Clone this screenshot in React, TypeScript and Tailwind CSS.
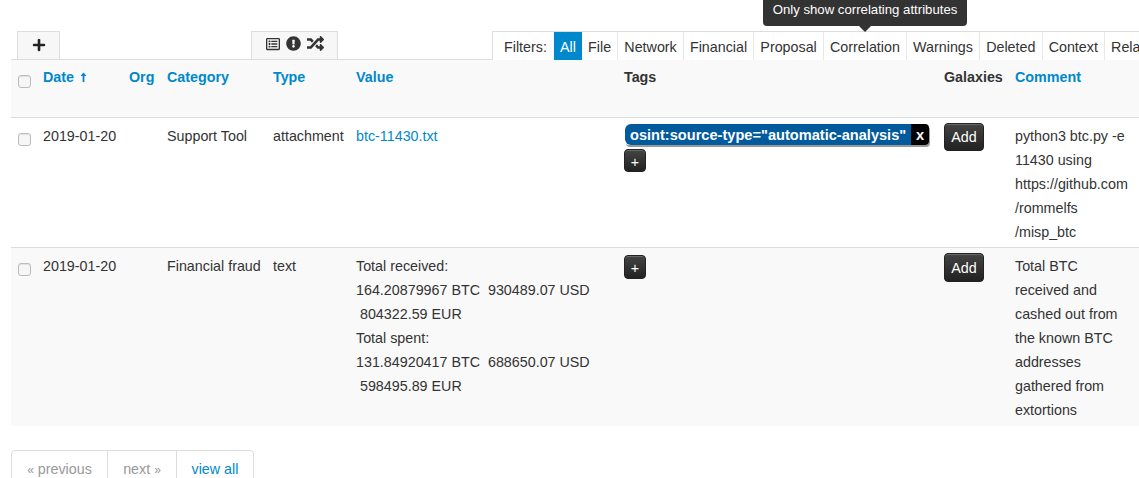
import { FaPlus, FaRegListAlt, FaExclamationCircle, FaRandom } from 'react-icons/fa';

const filters = ['File', 'Network', 'Financial', 'Proposal', 'Correlation', 'Warnings', 'Deleted', 'Context', 'Related'];

const DarkButton = ({ label, className }: { label: string; className: string }) => (
  <span
    className={`flex items-center justify-center rounded-[4px] border border-[#222] bg-gradient-to-b from-[#444] to-[#222] text-white shadow-[inset_0_1px_0_rgba(255,255,255,0.2)] ${className}`}
  >
    {label}
  </span>
);

const Check = () => (
  <span className="block w-[13px] h-[13px] rounded-[3px] border border-[#bbb] bg-[#f6f6f6] shadow-[inset_0_1px_1px_rgba(0,0,0,0.08)]" />
);

const SortArrow = () => (
  <svg width="7" height="11" viewBox="0 0 7 11" className="inline-block ml-[2px] mb-[2px]">
    <path d="M3.5 0.5 L6.5 4 H4.4 V10 H2.6 V4 H0.5 Z" fill="#0088cc" />
  </svg>
);

const App = () => {
  return (
    <div className="relative w-[1139px] h-[478px] overflow-hidden bg-white font-['Liberation_Sans',sans-serif] text-[14.3px] leading-[24px] text-[#333]">
      {/* Tooltip */}
      <div className="absolute left-[763px] top-0 z-10 flex flex-col items-center">
        <div className="w-[204px] h-[26px] rounded-b-[4px] bg-[#333] text-center text-white text-[13.2px] leading-[20px]">
          Only show correlating attributes
        </div>
        <div className="w-0 h-0 border-x-[6px] border-x-transparent border-t-[6px] border-t-[#333]" />
      </div>

      <div className="pl-[11px] pt-[31px]">
        {/* Tab bar */}
        <div className="flex h-[28px] w-[1128px]">
          <div className="ml-[6px] w-[43px] h-[28px] pb-[2px] flex items-center justify-center bg-[#f7f7f7] border border-b-0 border-[#ddd] text-[#222]">
            <FaPlus size={14} />
          </div>
          <div className="ml-[191px] w-[87px] h-[28px] pb-[4px] flex items-center justify-center gap-[6px] bg-[#f7f7f7] border border-b-0 border-[#ddd] text-[#333]">
            <FaRegListAlt size={14} />
            <FaExclamationCircle size={15} />
            <FaRandom size={17} />
          </div>
          <div className="ml-[154px] relative z-[1] h-[29px] flex flex-1 bg-white border-t border-l border-[#ddd] overflow-hidden text-[#333]">
            <span className="w-[61px] shrink-0 pl-[11px] leading-[31px]">Filters:</span>
            <span className="w-[28px] shrink-0 text-center bg-[#0088cc] text-white leading-[31px]">All</span>
            {filters.map((f) => (
              <span key={f} className="shrink-0 px-[6.1px] leading-[31px] border-r border-[#e8e8e8]">
                {f}
              </span>
            ))}
          </div>
        </div>

        {/* Attribute table */}
        <table className="w-[1140px] table-fixed border-collapse">
          <colgroup>
            <col className="w-[24px]" />
            <col className="w-[86px]" />
            <col className="w-[38px]" />
            <col className="w-[106px]" />
            <col className="w-[83px]" />
            <col className="w-[268px]" />
            <col className="w-[320px]" />
            <col className="w-[71px]" />
            <col className="w-[144px]" />
          </colgroup>
          <thead>
            <tr className="h-[58px] bg-[#f9f9f9] border-t border-b border-[#ddd] align-top text-left text-[#0088cc] font-bold">
              <th className="pl-[7px] pt-[15px]"><Check /></th>
              <th className="pl-[8px] pt-[5px]">Date <SortArrow /></th>
              <th className="pl-[8px] pt-[5px]">Org</th>
              <th className="pl-[8px] pt-[5px]">Category</th>
              <th className="pl-[8px] pt-[5px]">Type</th>
              <th className="pl-[8px] pt-[5px]">Value</th>
              <th className="pl-[8px] pt-[5px] text-[#333]">Tags</th>
              <th className="pl-[8px] pt-[5px] text-[#333]">Galaxies</th>
              <th className="pl-[8px] pt-[5px]">Comment</th>
            </tr>
          </thead>
          <tbody className="align-top">
            <tr className="border-b border-[#ddd]">
              <td className="pl-[7px] pt-[15px]"><Check /></td>
              <td className="pl-[8px] pt-[6px] pb-[3px]">2019-01-20</td>
              <td />
              <td className="pl-[8px] pt-[6px]">Support Tool</td>
              <td className="pl-[8px] pt-[6px]">attachment</td>
              <td className="pl-[8px] pt-[6px] text-[#0088cc]">btc-11430.txt</td>
              <td className="pl-[8px] pt-[6px]">
                <div className="flex ml-[1px] w-[304px] h-[21px] shadow-[1px_2px_0_#999] rounded-[4px] font-bold text-[14.6px] text-white leading-[22px]">
                  <span className="w-[286px] bg-[#005a9c] rounded-l-[6px] pl-[5px] whitespace-nowrap">
                    osint:source-type="automatic-analysis"
                  </span>
                  <span className="w-[18px] bg-black rounded-r-[4px] text-center">x</span>
                </div>
                <DarkButton label="+" className="w-[22px] h-[23px] mt-[4px] pt-[2px]" />
              </td>
              <td className="pl-[8px] pt-[5px]">
                <DarkButton label="Add" className="w-[40px] h-[28px]" />
              </td>
              <td className="pl-[8px] pt-[6px] pb-[3px] pr-[21px] break-words">
                python3 btc.py -e 11430 using https://github.com /rommelfs /misp_btc
              </td>
            </tr>
            <tr className="bg-[#f9f9f9] h-[178px]">
              <td className="pl-[7px] pt-[15px]"><Check /></td>
              <td className="pl-[8px] pt-[6px]">2019-01-20</td>
              <td />
              <td className="pl-[8px] pt-[6px]">Financial fraud</td>
              <td className="pl-[8px] pt-[6px]">text</td>
              <td className="pl-[8px] pt-[6px] whitespace-pre">
                {'Total received:\n164.20879967 BTC  930489.07 USD\n 804322.59 EUR\nTotal spent:\n131.84920417 BTC  688650.07 USD\n 598495.89 EUR'}
              </td>
              <td className="pl-[8px] pt-[7px]">
                <DarkButton label="+" className="w-[22px] h-[24px] pt-[2px]" />
              </td>
              <td className="pl-[8px] pt-[5px]">
                <DarkButton label="Add" className="w-[40px] h-[29px]" />
              </td>
              <td className="pl-[8px] pt-[6px] pb-[4px] pr-[21px]">
                Total BTC received and cashed out from the known BTC addresses gathered from extortions
              </td>
            </tr>
          </tbody>
        </table>

        {/* Pagination */}
        <div className="mt-[24px] inline-flex h-[40px] rounded-t-[4px] border border-[#ddd] leading-[36px]">
          <span className="w-[96px] text-center text-[#999] border-r border-[#ddd]">
            <span className="text-[12px]">«</span> previous
          </span>
          <span className="w-[69px] text-center text-[#999] border-r border-[#ddd]">
            next <span className="text-[12px]">»</span>
          </span>
          <span className="w-[76px] text-center text-[#0088cc]">view all</span>
        </div>
      </div>
    </div>
  );
};

export default App;
